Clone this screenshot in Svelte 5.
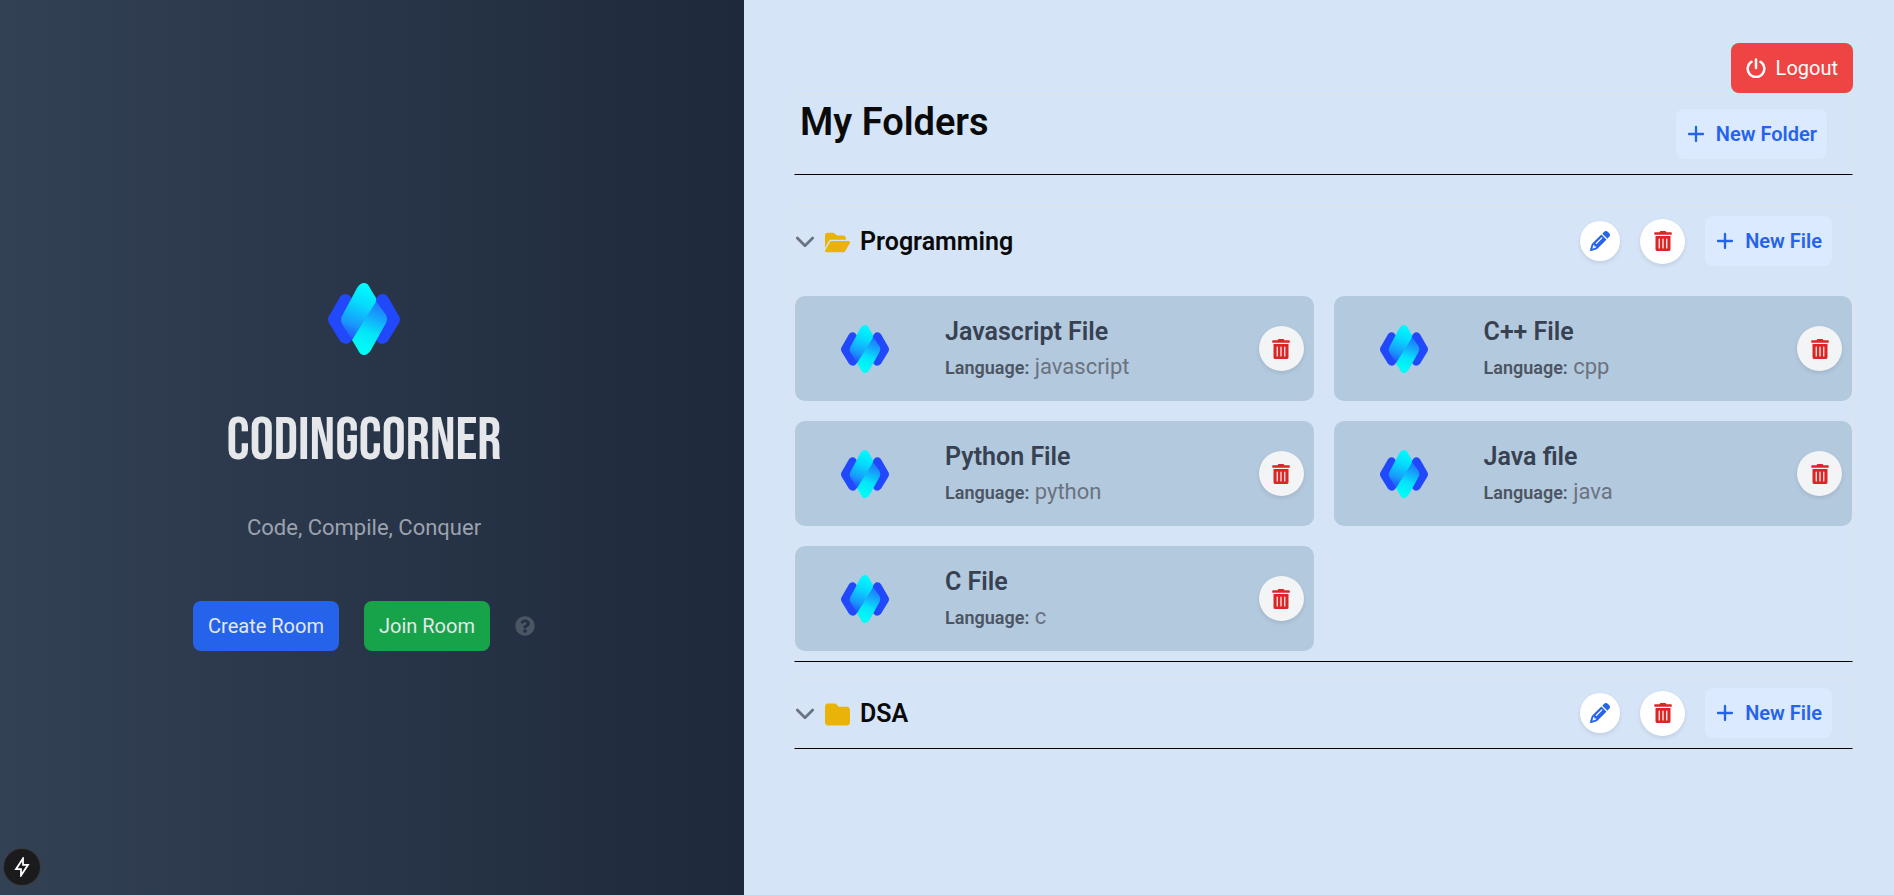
<script>
  const folders = $state([
    {
      name: 'Programming',
      open: true,
      files: [
        { title: 'Javascript File', language: 'javascript' },
        { title: 'C++ File', language: 'cpp' },
        { title: 'Python File', language: 'python' },
        { title: 'Java file', language: 'java' },
        { title: 'C File', language: 'c' },
      ],
    },
    { name: 'DSA', open: false, files: [] },
  ]);
</script>

{#snippet logo(id)}
  <svg class="logo" viewBox="0 0 72 72" aria-hidden="true">
    <defs>
      <linearGradient id="{id}-up" gradientUnits="userSpaceOnUse" x1="40" y1="2" x2="20" y2="54">
        <stop offset="0" stop-color="#00fbff" />
        <stop offset="0.35" stop-color="#06dcfd" />
        <stop offset="0.75" stop-color="#1899fb" />
        <stop offset="1" stop-color="#2257fb" />
      </linearGradient>
      <linearGradient id="{id}-down" gradientUnits="userSpaceOnUse" x1="52" y1="18" x2="34" y2="66">
        <stop offset="0" stop-color="#2070fb" />
        <stop offset="0.3" stop-color="#16a0fb" />
        <stop offset="0.65" stop-color="#05e4fa" />
        <stop offset="1" stop-color="#00fbf6" />
      </linearGradient>
    </defs>
    <path fill="#2148fb" d="M12 14q2-3 5-3t5 2l14 23-13 22q-2 3-5 3t-6-3L1 40q-2-4 0-7z" />
    <path fill="#2148fb" d="M60 14q-2-3-5-3t-5 2L36 36l13 22q2 3 5 3t6-3l11-18q2-4 0-7z" />
    <path fill="url(#{id}-down)" d="M48 18l10 14q2 4 0 8L43 67q-3 5-7 5t-6-5l-6-10 9-21z" />
    <path fill="url(#{id}-up)" d="M29 5q3-5 7-5t6 5l6 10q1 3-2 7L24 57 14 41q-2-4 0-8z" />
  </svg>
{/snippet}

{#snippet trash()}
  <svg class="trash" viewBox="0 0 448 512" fill="currentColor" aria-hidden="true">
    <path d="M32 464a48 48 0 0 0 48 48h288a48 48 0 0 0 48-48V128H32zm272-256a16 16 0 0 1 32 0v224a16 16 0 0 1-32 0zm-96 0a16 16 0 0 1 32 0v224a16 16 0 0 1-32 0zm-96 0a16 16 0 0 1 32 0v224a16 16 0 0 1-32 0zM432 32H312l-9.4-18.7A24 24 0 0 0 281.1 0H166.8a23.72 23.72 0 0 0-21.4 13.3L136 32H16A16 16 0 0 0 0 48v32a16 16 0 0 0 16 16h416a16 16 0 0 0 16-16V48a16 16 0 0 0-16-16z" />
  </svg>
{/snippet}

{#snippet plus()}
  <svg class="icon" viewBox="0 0 20 20" fill="none" stroke="currentColor" stroke-width="2.300" stroke-linecap="round" aria-hidden="true">
    <path d="M10 3v14M3 10h14" />
  </svg>
{/snippet}

<div class="page">
  <aside class="hero">
    <div class="mark">{@render logo('brand')}</div>
    <h1>CODINGCORNER</h1>
    <p class="tagline">Code, Compile, Conquer</p>
    <div class="actions">
      <button class="btn create">Create Room</button>
      <button class="btn join">Join Room</button>
      <button class="help" aria-label="Help">
        <svg viewBox="0 0 512 512" fill="currentColor" aria-hidden="true">
          <path d="M504 256c0 136.997-111.043 248-248 248S8 392.997 8 256C8 119.083 119.043 8 256 8s248 111.083 248 248zM262.655 90c-54.497 0-89.255 22.957-116.549 63.758-3.536 5.286-2.353 12.415 2.715 16.258l34.699 26.31c5.205 3.947 12.621 3.008 16.665-2.122 17.864-22.658 30.113-35.797 57.303-35.797 20.429 0 45.698 13.148 45.698 32.958 0 14.976-12.363 22.667-32.534 33.976C247.128 238.528 216 254.941 216 296v4c0 6.627 5.373 12 12 12h56c6.627 0 12-5.373 12-12v-1.333c0-28.462 83.186-29.647 83.186-106.667 0-58.002-60.165-102-116.531-102zM256 338c-25.365 0-46 20.635-46 46 0 25.364 20.635 46 46 46s46-20.636 46-46c0-25.365-20.635-46-46-46z" />
        </svg>
      </button>
    </div>
    <button class="dev" aria-label="Developer tools">
      <svg viewBox="0 0 20 20" fill="none" stroke="currentColor" stroke-width="1.8" aria-hidden="true">
        <path d="M11 1.500v6.300h5L9 18.500v-6.300H4z" />
      </svg>
    </button>
  </aside>

  <main class="panel">
    <button class="btn logout">
      <svg class="icon" viewBox="0 0 20 20" fill="none" stroke="currentColor" stroke-width="2.500" stroke-linecap="round" aria-hidden="true">
        <path d="M10 1.500v8.500M5.500 3.800a8.300 8.300 0 1 0 9 0" />
      </svg>
      Logout
    </button>

    <header class="frame top">
      <h2>My Folders</h2>
      <button class="btn add">{@render plus()}New Folder</button>
    </header>

    <div class="folders">
      {#each folders as folder}
        <section class="frame folder">
          <div class="row">
            <button class="name" aria-expanded={folder.open} onclick={() => (folder.open = !folder.open)}>
              <svg class="chevron" viewBox="0 0 20 20" fill="none" stroke="currentColor" stroke-width="2.700" stroke-linecap="round" stroke-linejoin="round" aria-hidden="true">
                <path d="M2.300 6l7.700 7.700L17.700 6" />
              </svg>
              {#if folder.open}
                <svg class="folder-icon" viewBox="0 0 576 512" fill="currentColor" aria-hidden="true">
                  <path d="M88.700 223.800L0 375.800V96C0 60.700 28.700 32 64 32H181.500c17 0 33.300 6.700 45.300 18.700l26.500 26.500c12 12 28.300 18.700 45.300 18.700H416c35.300 0 64 28.700 64 64v32H144c-22.800 0-43.800 12.100-55.300 31.800zm27.600 16.100C122.100 230 132.600 224 144 224H544c11.500 0 22 6.100 27.700 16.100s5.700 22.200-.1 32.100l-112 192C453.900 474 443.400 480 432 480H32c-11.500 0-22-6.100-27.700-16.100s-5.700-22.200 .1-32.100l112-192z" />
                </svg>
              {:else}
                <svg class="folder-icon" viewBox="0 0 512 512" fill="currentColor" aria-hidden="true">
                  <path d="M64 480H448c35.300 0 64-28.700 64-64V160c0-35.300-28.700-64-64-64H288c-10.100 0-19.600-4.700-25.600-12.800L243.200 57.600C231.100 41.500 212.100 32 192 32H64C28.700 32 0 60.700 0 96V416c0 35.300 28.700 64 64 64z" />
                </svg>
              {/if}
              <span>{folder.name}</span>
            </button>
            <div class="tools">
              <button class="round edit" aria-label="Rename {folder.name}">
                <svg class="icon" viewBox="0 0 512 512" fill="currentColor" aria-hidden="true">
                  <path d="M410.300 231l11.300-11.300-33.900-33.900-62.100-62.100L291.700 89.800l-11.300 11.300-22.600 22.600L58.600 322.900c-10.400 10.400-18 23.300-22.200 37.400L1 480.700c-2.500 8.400-.2 17.500 6.100 23.700s15.300 8.500 23.700 6.100l120.300-35.400c14.100-4.200 27-11.800 37.400-22.200L387.700 253.700 410.300 231zM160 399.400l-9.100 22.700c-4 3.100-8.500 5.400-13.300 6.900L59.400 452l23-78.100c1.400-4.900 3.800-9.400 6.900-13.300l22.700-9.100v32c0 8.800 7.200 16 16 16h32zM362.700 18.700L348.300 33.200 325.700 55.800 314.300 67.100l33.900 33.900 62.100 62.100 33.900 33.900 11.300-11.300 22.600-22.600 14.500-14.500c25-25 25-65.500 0-90.500L453.300 18.700c-25-25-65.500-25-90.500 0zm-47.400 168l-144 144c-6.200 6.200-16.400 6.200-22.600 0s-6.200-16.400 0-22.600l144-144c6.200-6.200 16.400-6.200 22.600 0s6.200 16.400 0 22.600z" />
                </svg>
              </button>
              <button class="round remove" aria-label="Delete {folder.name}">{@render trash()}</button>
              <button class="btn add">{@render plus()}New File</button>
            </div>
          </div>
          {#if folder.open}
            <div class="files">
              {#each folder.files as file, i}
                <article class="card">
                  {@render logo(`file-${i}`)}
                  <div class="info">
                    <h3>{file.title}</h3>
                    <p><b>Language:</b> {file.language}</p>
                  </div>
                  <button class="round remove" aria-label="Delete {file.title}">{@render trash()}</button>
                </article>
              {/each}
            </div>
          {/if}
        </section>
      {/each}
    </div>
  </main>
</div>

<style>
  :global(body) {
    margin: 0;
    font-family: Roboto, 'Open Sans', sans-serif;
    font-size: 20px;
    line-height: 30px;
    color: #0a0a0a;
  }

  .page {
    display: grid;
    grid-template-columns: minmax(0, 11fr) minmax(0, 17fr);
    min-height: 100vh;
  }

  h1, h2, h3, p { margin: 0; }

  button {
    font: inherit;
    color: inherit;
    border: 0;
    padding: 0;
    background: none;
    cursor: pointer;
  }

  svg { display: block; flex: none; }

  .icon { width: 20px; height: 20px; }

  .btn {
    display: flex;
    align-items: center;
    gap: 10px;
    padding: 10px 15px;
    border-radius: 8px;
    white-space: nowrap;
  }

  .hero {
    box-sizing: border-box;
    display: flex;
    flex-direction: column;
    align-items: center;
    justify-content: center;
    padding: 38px 16px 0 0;
    background: linear-gradient(to right, #334155, #1e293b);
    color: #e5e7eb;
  }

  .mark .logo { width: 72px; height: 72px; }

  h1 {
    margin-top: 50px;
    font-family: 'Bebas Neue', 'Liberation Sans Narrow', Roboto, sans-serif;
    font-size: 60px;
    line-height: 72px;
    font-weight: 400;
  }

  .tagline {
    margin-top: 34px;
    font-size: 22px;
    line-height: 34px;
    color: #9ca3af;
  }

  .actions {
    display: flex;
    align-items: center;
    gap: 25px;
    margin-top: 56px;
  }

  .create { background: #2563eb; }
  .join { background: #16a34a; }

  .help { color: #4b5563; }
  .help svg { width: 20px; height: 20px; }

  .dev {
    position: fixed;
    left: 4px;
    bottom: 10px;
    display: grid;
    place-items: center;
    width: 36px;
    height: 36px;
    border-radius: 50%;
    background: #1b1b1d;
    box-shadow: 0 0 0 1px #3a3a3c;
    color: #fff;
  }
  .dev svg { width: 20px; height: 20px; }

  .panel {
    display: flex;
    flex-direction: column;
    padding: 43px 41px 40px 50px;
    background: #d5e4f7;
  }

  .logout {
    align-self: flex-end;
    background: #ef4444;
    color: #fff;
  }

  .frame {
    border: 1px solid #e0e3e8;
    border-bottom-color: #000;
  }

  .top {
    display: flex;
    justify-content: space-between;
    padding: 15px 25px 15px 5px;
  }

  h2 {
    font-size: 38px;
    line-height: 26px;
    font-weight: 600;
  }

  .add {
    padding: 10px;
    background: #dbeafe;
    color: #2563eb;
    font-weight: 600;
  }

  .folders {
    display: flex;
    flex-direction: column;
    gap: 15px;
    margin-top: 30px;
  }

  .folder { padding: 10px 0; }

  .row {
    display: flex;
    align-items: center;
    justify-content: space-between;
    padding-right: 20px;
  }

  .name {
    display: flex;
    align-items: center;
    gap: 10px;
    padding-top: 2px;
    font-size: 25px;
    font-weight: 600;
  }

  .chevron { width: 20px; height: 20px; color: #6b7280; }
  .folder-icon { width: 25px; height: 25px; color: #eab308; }

  .tools {
    display: flex;
    align-items: center;
    gap: 20px;
  }

  .round {
    display: grid;
    place-items: center;
    flex: none;
    border-radius: 50%;
    background: #fff;
    box-shadow: 0 2px 4px rgb(0 0 0 / 0.1);
  }

  .edit { width: 40px; height: 40px; color: #2563eb; }
  .remove { width: 45px; height: 45px; color: #dc2626; }
  .trash { width: 18px; height: 20px; }

  .files {
    display: grid;
    grid-template-columns: repeat(2, minmax(0, 1fr));
    gap: 20px;
    margin-top: 30px;
  }

  .card {
    display: flex;
    align-items: center;
    padding: 15px 10px 15px 46px;
    border-radius: 10px;
    background: #b3c9de;
  }

  .card .logo { width: 48px; height: 48px; }

  .info {
    flex: 1;
    min-width: 0;
    margin-left: 56px;
    padding: 3px 0 2px;
  }

  .card .remove { background: #f3f4f6; }

  h3 {
    font-size: 25px;
    line-height: 35px;
    font-weight: 600;
    color: #374151;
  }

  .info p {
    font-size: 22px;
    line-height: 35px;
    color: #6b7280;
  }

  .info b {
    font-size: 18px;
    line-height: 20px;
    font-weight: 600;
    color: #4b5563;
  }
</style>
